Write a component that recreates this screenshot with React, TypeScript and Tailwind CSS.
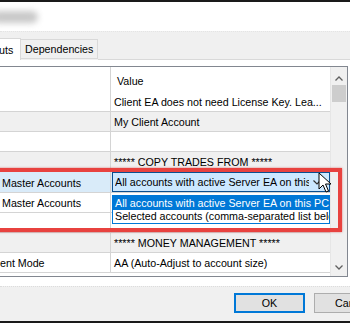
import React from 'react'

const rows = [
  { value: 'Client EA does not need License Key. Lea...', bg: 'bg-white' },
  { value: 'My Client Account', bg: 'bg-[#f0f0f0]' },
  { value: '', bg: 'bg-white' },
  { value: '***** COPY TRADES FROM *****', bg: 'bg-[#f0f0f0]' },
]

function Cursor() {
  return (
    <svg width="14" height="22" viewBox="0 0 14 22" className="absolute left-[318px] top-[172px]">
      <path d="M1 1 L1 17 L5 13 L8 20 L10.5 19 L7.5 12 L13 12 Z" fill="white" stroke="black" strokeWidth="1" strokeLinejoin="round" />
    </svg>
  )
}

export default function App() {
  return (
    <div className="relative w-[350px] h-[323px] overflow-hidden bg-white text-[10.7px] text-black font-['Liberation_Sans',Arial,sans-serif]">
      <div className="h-[2px] bg-[#1a1a1a]" />
      <div className="h-[29px] bg-white flex items-center">
        <div className="ml-[-8px] w-[46px] h-[12px] rounded-full bg-[#c8c8c8] blur-[3px]" />
      </div>

      {/* tab strip */}
      <div className="h-[29px] bg-[#f0f0f0] border-t border-dotted border-[#e4e4e4] flex items-end">
        <div className="h-[22px] w-[21px] bg-white border-r border-t border-[#d9d9d9] flex items-center shrink-0">
          <span className="-ml-[1px] mt-[1px]">uts</span>
        </div>
        <div className="h-[20px] px-[4px] mb-[1px] bg-[#f0f0f0] border border-l-0 border-[#d9d9d9] flex items-center shrink-0">
          Dependencies
        </div>
        <div className="flex-1 h-px bg-[#d9d9d9]" />
      </div>
      <div className="h-[6px] bg-white" />

      {/* property list */}
      <div className="h-[211px] border-t border-r border-b border-[#828790] mr-[2px] flex">
        <div className="flex-1 flex flex-col">
          <div className="h-[25px] flex">
            <div className="w-[111px] border-r border-[#d4d4d4]" />
            <div className="flex-1 flex items-center pl-[6px] pt-[4px]">Value</div>
          </div>
          {rows.map((r, i) => (
            <div key={i} className={`h-[20px] flex border-b border-[#d4d4d4] ${r.bg}`}>
              <div className="w-[111px] border-r border-[#d4d4d4]" />
              <div className="flex-1 flex items-center pl-[3px] pt-[2px] whitespace-nowrap overflow-hidden">{r.value}</div>
            </div>
          ))}
          <div className="h-[21px] flex border-b border-[#d4d4d4] bg-[#d9ebf9]">
            <div className="w-[111px] border-r border-[#d4d4d4] flex items-center pl-[2px] pt-[2px]">Master Accounts</div>
            <div className="flex-1 flex items-center pl-[1px]">
              <div className="h-[20px] w-[218px] border border-[#0a4f8f] bg-[#cce8ff] flex items-center pl-[2px] pt-[1px]">
                <div className="w-[194px] whitespace-nowrap overflow-hidden">All accounts with active Server EA on this</div>
                <svg width="8" height="5" viewBox="0 0 8 5" className="ml-[4px]">
                  <path d="M0.5 0.5 L4 4 L7.5 0.5" fill="none" stroke="#333" strokeWidth="1.2" />
                </svg>
              </div>
            </div>
          </div>
          <div className="h-[20px] flex border-b border-[#d4d4d4] bg-white">
            <div className="w-[111px] border-r border-[#d4d4d4] flex items-center pl-[2px] pt-[2px]">Master Accounts</div>
            <div className="flex-1" />
          </div>
          <div className="h-[20px] flex border-b border-[#d4d4d4] bg-white">
            <div className="w-[111px] border-r border-[#d4d4d4]" />
            <div className="flex-1" />
          </div>
          <div className="h-[20px] flex border-b border-[#d4d4d4] bg-[#f0f0f0]">
            <div className="w-[111px] border-r border-[#d4d4d4]" />
            <div className="flex-1 flex items-center pl-[3px] pt-[2px] whitespace-nowrap">***** MONEY MANAGEMENT *****</div>
          </div>
          <div className="h-[20px] flex border-b border-[#d4d4d4] bg-white">
            <div className="w-[111px] border-r border-[#d4d4d4] flex items-center pt-[2px] whitespace-nowrap overflow-hidden">
              ent Mode
            </div>
            <div className="flex-1 flex items-center pl-[3px] pt-[2px] whitespace-nowrap">AA (Auto-Adjust to account size)</div>
          </div>
        </div>

        {/* scrollbar */}
        <div className="w-[18px] bg-[#f0f0f0] flex flex-col border-l border-[#e6e6e6]">
          <div className="h-[18px] flex items-end justify-center pb-[4px]">
            <svg width="8" height="5" viewBox="0 0 8 5"><path d="M0.5 4.5 L4 1 L7.5 4.5" fill="none" stroke="#606060" strokeWidth="1.3" /></svg>
          </div>
          <div className="h-[17px] bg-[#cdcdcd] mx-[1px]" />
          <div className="flex-1" />
          <div className="h-[17px] flex items-center justify-center">
            <svg width="8" height="5" viewBox="0 0 8 5"><path d="M0.5 0.5 L4 4 L7.5 0.5" fill="none" stroke="#606060" strokeWidth="1.3" /></svg>
          </div>
        </div>
      </div>

      <div className="h-[9px] bg-white" />

      {/* buttons */}
      <div className="h-[35px] bg-[#f0f0f0] border-t border-dotted border-[#dcdcdc] flex items-start pt-[6px] pl-[234px] gap-[9px]">
        <button className="h-[20px] w-[71px] shrink-0 bg-[#e1e1e1] border-2 border-[#0078d7] flex items-center justify-center">OK</button>
        <button className="h-[20px] w-[71px] shrink-0 bg-[#e1e1e1] border border-[#adadad] flex items-center justify-start pl-[20px]">Cancel</button>
      </div>
      <div className="h-[2px] bg-[#1a1a1a]" />

      {/* dropdown list */}
      <div className="absolute left-[112px] top-[195px] w-[218px] border border-[#0078d7] bg-white whitespace-nowrap overflow-hidden">
        <div className="h-[14px] bg-[#0078d7] text-white flex items-center pl-[2px]">All accounts with active Server EA on this PC</div>
        <div className="h-[13px] flex items-center pl-[2px]">Selected accounts (comma-separated list below)</div>
      </div>

      {/* annotation */}
      <div className="absolute left-[-10px] top-[168px] w-[352px] h-[64px] border-4 border-[#e8423f] shadow-[0_0_2px_rgba(200,0,0,0.5)]" />

      <Cursor />
    </div>
  )
}
